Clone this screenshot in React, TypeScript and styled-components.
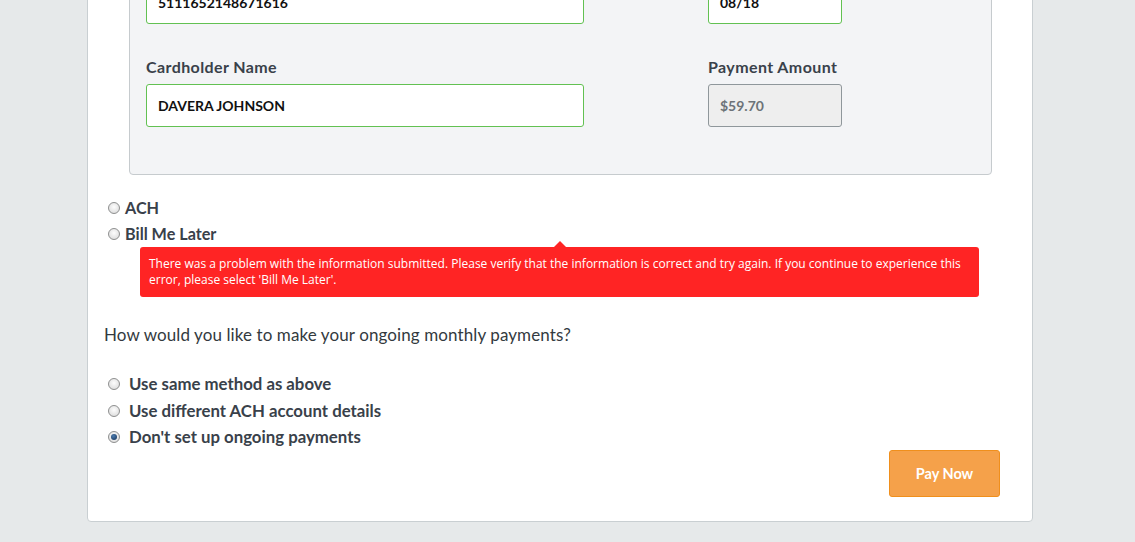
import React from "react";
import styled, { createGlobalStyle } from "styled-components";

const Global = createGlobalStyle`
  html, body { margin: 0; padding: 0; background: #e6e9ea; overflow: hidden; }
  body { font-family: Lato, "Noto Sans", sans-serif; color: #333a40; }
`;

const Page = styled.div`
  width: 1135px;
  height: 542px;
  overflow: hidden;
`;

const Card = styled.div`
  margin: -67px 0 0 87px;
  width: 946px;
  background: #fff;
  border: 1px solid #c9cfd2;
  border-radius: 4px;
  padding: 0 0 24px 0;
  box-sizing: border-box;
`;

const Panel = styled.div`
  margin: 0 40px 0 41px;
  background: #f3f4f6;
  border: 1px solid #c6cbce;
  border-radius: 4px;
  padding: 20px 16px 47px 16px;
  display: grid;
  grid-template-columns: 438px 134px;
  column-gap: 124px;
  row-gap: 34px;
`;

const Field = styled.div`
  display: flex;
  flex-direction: column;
  gap: 8px;
`;

const Label = styled.label`
  font-weight: 700;
  font-size: 16px;
  letter-spacing: 0.4px;
  line-height: 18px;
  color: #39414a;
`;

const Input = styled.div<{ $disabled?: boolean }>`
  height: 43px;
  box-sizing: border-box;
  border: 1px solid ${(p) => (p.$disabled ? "#8f979b" : "#62c152")};
  background: ${(p) => (p.$disabled ? "#eeeeee" : "#fff")};
  border-radius: 3px;
  padding: 0 11px;
  display: flex;
  align-items: center;
  font-weight: 700;
  font-size: 14px;
  color: ${(p) => (p.$disabled ? "#6c7378" : "#111")};
`;

const Methods = styled.div`
  padding: 24px 0 0 20px;
  display: flex;
  flex-direction: column;
  gap: 8px;
`;

const RadioRow = styled.label<{ $big?: boolean }>`
  display: flex;
  align-items: center;
  gap: ${(p) => (p.$big ? "9px" : "5px")};
  font-weight: 700;
  font-size: ${(p) => (p.$big ? "16.8px" : "16.2px")};
  line-height: 18px;
  color: #39414a;
`;

const Radio = styled.span<{ $checked?: boolean }>`
  width: 12px;
  height: 12px;
  border-radius: 50%;
  box-sizing: border-box;
  border: 1px solid #8e8f8f;
  background: radial-gradient(circle at 50% 40%, #fdfdfd 0%, #e2e2e2 70%, #cfcfcf 100%);
  position: relative;
  flex: none;
  &::after {
    content: "";
    display: ${(p) => (p.$checked ? "block" : "none")};
    position: absolute;
    left: 2px;
    top: 2px;
    width: 6px;
    height: 6px;
    border-radius: 50%;
    background: radial-gradient(circle at 40% 35%, #4a7bb0 0%, #1f3f66 80%);
  }
`;

const ErrorBox = styled.div`
  position: relative;
  margin: 4px 53px 0 52px;
  background: #ff2424;
  border-radius: 3px;
  color: #fff;
  font-family: "Open Sans", "Noto Sans", sans-serif;
  font-size: 12px;
  line-height: 16px;
  padding: 9px 9px 9px 9px;
  &::before {
    content: "";
    position: absolute;
    top: -6px;
    left: 414px;
    border-left: 6px solid transparent;
    border-right: 6px solid transparent;
    border-bottom: 6px solid #ff2424;
  }
`;

const Question = styled.p`
  margin: 28px 0 0 16px;
  font-size: 17px;
  letter-spacing: 0.1px;
  line-height: 20px;
  color: #333a40;
`;

const Ongoing = styled.div`
  padding: 30px 0 0 20px;
  display: flex;
  flex-direction: column;
  gap: 8.5px;
`;

const Actions = styled.div`
  display: flex;
  justify-content: flex-end;
  padding: 4px 32px 0 0;
`;

const PayButton = styled.button`
  width: 111px;
  height: 47px;
  background: #f5a14a;
  border: 1px solid #f08f1c;
  border-radius: 3px;
  color: #fff;
  font-family: Lato, sans-serif;
  font-weight: 700;
  font-size: 14.5px;
`;

export default function App() {
  return (
    <Page>
      <Global />
      <Card>
        <Panel>
          <Field>
            <Label>Card Number</Label>
            <Input>5111652148671616</Input>
          </Field>
          <Field>
            <Label>Expiration</Label>
            <Input>08/18</Input>
          </Field>
          <Field>
            <Label>Cardholder Name</Label>
            <Input>DAVERA JOHNSON</Input>
          </Field>
          <Field>
            <Label>Payment Amount</Label>
            <Input $disabled>$59.70</Input>
          </Field>
        </Panel>
        <Methods>
          <RadioRow>
            <Radio />
            ACH
          </RadioRow>
          <RadioRow>
            <Radio />
            Bill Me Later
          </RadioRow>
        </Methods>
        <ErrorBox>
          There was a problem with the information submitted. Please verify that the information is correct and try again. If you continue to experience this error, please select 'Bill Me Later'.
        </ErrorBox>
        <Question>How would you like to make your ongoing monthly payments?</Question>
        <Ongoing>
          <RadioRow $big>
            <Radio />
            Use same method as above
          </RadioRow>
          <RadioRow $big>
            <Radio />
            Use different ACH account details
          </RadioRow>
          <RadioRow $big>
            <Radio $checked />
            Don't set up ongoing payments
          </RadioRow>
        </Ongoing>
        <Actions>
          <PayButton>Pay Now</PayButton>
        </Actions>
      </Card>
    </Page>
  );
}
